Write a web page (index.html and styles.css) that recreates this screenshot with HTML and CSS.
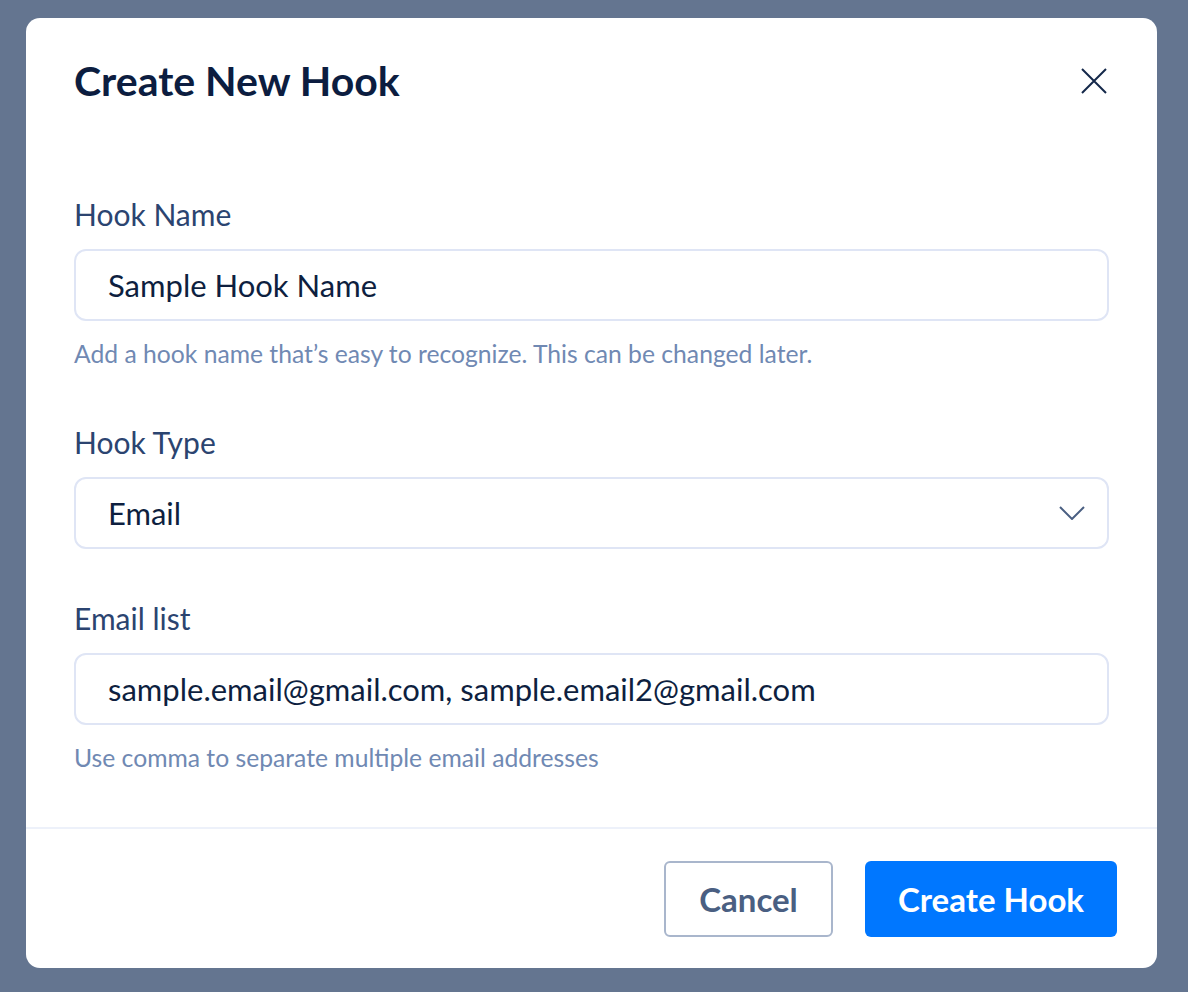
FILE: index.html
```html
<!DOCTYPE html>
<html lang="en">
<head>
<meta charset="utf-8">
<title>Create New Hook</title>
<link rel="stylesheet" href="styles.css">
</head>
<body>
<div class="modal">
  <div class="modal-header">
    <h1 class="title">Create New Hook</h1>
    <button class="close" aria-label="Close">
      <svg width="26" height="26" viewBox="0 0 26 26"><path d="M1 1L25 25M25 1L1 25" stroke="#14284a" stroke-width="2" fill="none"/></svg>
    </button>
  </div>
  <div class="modal-body">
    <label class="label">Hook Name</label>
    <div class="input">Sample Hook Name</div>
    <div class="help">Add a hook name that’s easy to recognize. This can be changed later.</div>

    <label class="label label-gap">Hook Type</label>
    <div class="input select">
      <span>Email</span>
      <svg class="chev" width="26" height="14" viewBox="0 0 26 14"><path d="M1 1L13 13L25 1" stroke="#4a5f82" stroke-width="2" fill="none"/></svg>
    </div>

    <label class="label label-gap2">Email list</label>
    <div class="input">sample.email@gmail.com, sample.email2@gmail.com</div>
    <div class="help">Use comma to separate multiple email addresses</div>
  </div>
  <div class="modal-footer">
    <button class="btn btn-cancel">Cancel</button>
    <button class="btn btn-primary">Create Hook</button>
  </div>
</div>
</body>
</html>
```
FILE: styles.css
```css
html, body {
  margin: 0;
  padding: 0;
}
body {
  background: #647590;
  width: 1188px;
  height: 992px;
  padding: 18px 0 0 26px;
  box-sizing: border-box;
  font-family: "Lato", "Open Sans", sans-serif;
}
.modal {
  width: 1131px;
  height: 950px;
  background: #fff;
  border-radius: 14px;
  display: flex;
  flex-direction: column;
  box-sizing: border-box;
}
.modal-header {
  display: flex;
  align-items: center;
  justify-content: space-between;
  padding: 38px 50px 0 48px;
  height: 88px;
  box-sizing: border-box;
}
.title {
  margin: 0;
  font-family: "Lato", sans-serif;
  font-weight: 700;
  font-size: 41px;
  line-height: 48px;
  color: #0c1d40;
}
.close {
  border: 0;
  background: none;
  padding: 0;
  width: 26px;
  height: 26px;
  display: flex;
  cursor: pointer;
}
.modal-body {
  flex: 1;
  display: flex;
  flex-direction: column;
  padding: 90px 48px 0 48px;
}
.label {
  display: block;
  font-size: 30px;
  line-height: 36px;
  color: #2b4470;
}
.label-gap { margin-top: 54px; }
.label-gap2 { margin-top: 51px; }
.input {
  margin-top: 17px;
  height: 72px;
  box-sizing: border-box;
  border: 2px solid #dfe5f5;
  border-radius: 12px;
  padding: 0 32px;
  display: flex;
  align-items: center;
  font-size: 31px;
  color: #0e1f3f;
}
.select {
  justify-content: space-between;
  padding-right: 22px;
}
.help {
  margin-top: 17px;
  font-size: 24.7px;
  line-height: 32px;
  color: #7089b3;
}
.modal-footer {
  border-top: 2px solid #edf1fa;
  height: 141px;
  box-sizing: border-box;
  padding: 32px 40px 32px 0;
  display: flex;
  justify-content: flex-end;
  gap: 32px;
}
.btn {
  height: 76px;
  border-radius: 6px;
  font-family: "Lato", sans-serif;
  font-weight: 700;
  font-size: 33px;
  box-sizing: border-box;
  cursor: pointer;
}
.btn-cancel {
  width: 169px;
  background: #fff;
  border: 2px solid #a9b6cc;
  color: #4a5f82;
}
.btn-primary {
  width: 252px;
  background: #0077ff;
  border: 0;
  color: #fff;
}
```
